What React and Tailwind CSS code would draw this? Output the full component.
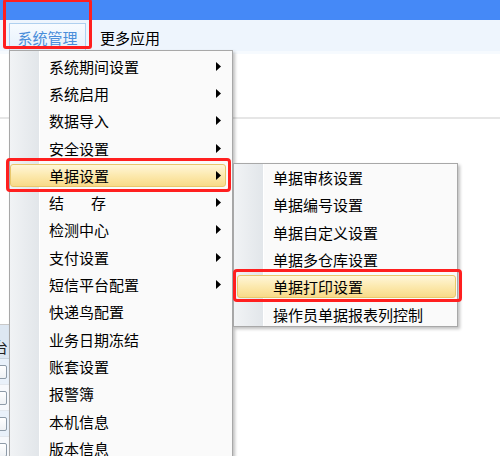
import React from "react";

const mainItems = [
  { t: "系统期间设置", a: true },
  { t: "系统启用", a: true },
  { t: "数据导入", a: true },
  { t: "安全设置", a: true },
  { t: "单据设置", a: true, hl: true },
  { t: "结存", a: true, spaced: true },
  { t: "检测中心", a: true },
  { t: "支付设置", a: true },
  { t: "短信平台配置", a: true },
  { t: "快递鸟配置" },
  { t: "业务日期冻结" },
  { t: "账套设置" },
  { t: "报警簿" },
  { t: "本机信息" },
  { t: "版本信息" },
];

const subItems = [
  { t: "单据审核设置" },
  { t: "单据编号设置" },
  { t: "单据自定义设置" },
  { t: "单据多仓库设置" },
  { t: "单据打印设置", hl: true },
  { t: "操作员单据报表列控制" },
];

function Arrow() {
  return (
    <svg width="5" height="9" viewBox="0 0 5 9" className="shrink-0">
      <path d="M0 0 L5 4.5 L0 9 Z" fill="#000" />
    </svg>
  );
}

function MenuItem({ item, hlClass }) {
  return (
    <div className="relative h-[27.3px] flex items-center">
      {item.hl && (
        <div
          className={`absolute top-[2px] bottom-[2px] rounded-[3px] border border-[#E9C76B] bg-gradient-to-b from-[#FFF6D8] via-[#FCE9AE] to-[#F8DA88] ${hlClass}`}
        />
      )}
      <div className="relative flex-1 flex items-center justify-between pl-[39px] pr-[11px]">
        <span className="text-[15px] leading-none text-black whitespace-nowrap">
          {item.spaced ? (
            <>
              结<span className="inline-block w-[27px]" />存
            </>
          ) : (
            item.t
          )}
        </span>
        {item.a && <Arrow />}
      </div>
    </div>
  );
}

function Gutter() {
  return (
    <div className="absolute left-0 top-0 bottom-0 w-[30px] bg-gradient-to-r from-[#F1F3F5] to-[#E2E6EA] border-r border-white" />
  );
}

export default function App() {
  return (
    <div className="relative w-[500px] h-[456px] overflow-hidden bg-white font-['Noto_Sans_CJK_SC',sans-serif]">
      {/* top blue bar */}
      <div className="h-[20px] bg-[#4589F7]" />
      {/* menu bar */}
      <div className="h-[31px] bg-[#EEF5FD] flex items-end pl-[9px]">
        <div className="h-[28px] w-[77px] border border-[#AFD0EF] bg-gradient-to-b from-[#F7FBFF] to-[#E6F1FC] flex items-center justify-center">
          <span className="text-[15px] leading-none text-[#4A8EDA]">系统管理</span>
        </div>
        <div className="h-[28px] flex items-center ml-[14px]">
          <span className="text-[15px] leading-none text-black">更多应用</span>
        </div>
      </div>
      <div className="h-[3px] bg-[#F6FAFE]" />
      <div className="h-[63px] bg-white" />
      <div className="h-[2px] bg-[#E6E6E6]" />

      {/* left table strip (mostly hidden under menu) */}
      <div className="mt-[205px] w-[40px] border-t border-[#C9C9C9]">
        <div className="h-[34px] bg-[#DDE7F2] flex items-end pb-[4px] border-b border-[#C8D3DE]">
          <span className="ml-[-7px] text-[15px] leading-none text-[#222]">台</span>
        </div>
        {[0, 1, 2, 3].map((i) => (
          <div
            key={i}
            className={`h-[26px] flex items-center border-b border-[#E3E8EE] ${i % 2 === 0 ? "bg-[#E9F1FA]" : "bg-[#F7F9FC]"}`}
          >
            <div className="ml-[-6px] w-[13px] h-[14px] rounded-[2px] border border-[#8E9BA8] bg-gradient-to-b from-white to-[#EEF1F4]" />
          </div>
        ))}
      </div>

      {/* main dropdown menu */}
      <div className="absolute left-[9px] top-[50px] w-[224px] h-[420px] border border-[#A8A8A8] bg-[#FAFAFA] shadow-[2px_2px_3px_rgba(0,0,0,0.25)] pt-[1.5px]">
        <Gutter />
        {mainItems.map((it) => (
          <MenuItem key={it.t} item={it} hlClass="left-0 right-[6px]" />
        ))}
      </div>

      {/* submenu */}
      <div className="absolute left-[233px] top-[163px] w-[225px] h-[164px] overflow-hidden border border-[#A8A8A8] bg-[#FAFAFA] shadow-[2px_2px_3px_rgba(0,0,0,0.25)]">
        <Gutter />
        {subItems.map((it) => (
          <MenuItem key={it.t} item={it} hlClass="left-[3px] right-[1px]" />
        ))}
      </div>

      {/* red annotation boxes */}
      <div className="absolute left-[3px] top-[-1px] w-[89px] h-[50px] border-[3px] border-[#FF1F1F] rounded-[3px]" />
      <div className="absolute left-[6px] top-[158px] w-[225px] h-[34px] border-[3px] border-[#FF1F1F] rounded-[4px]" />
      <div className="absolute left-[233px] top-[269px] w-[229px] h-[33px] border-[3px] border-[#FF1F1F] rounded-[4px]" />
    </div>
  );
}
